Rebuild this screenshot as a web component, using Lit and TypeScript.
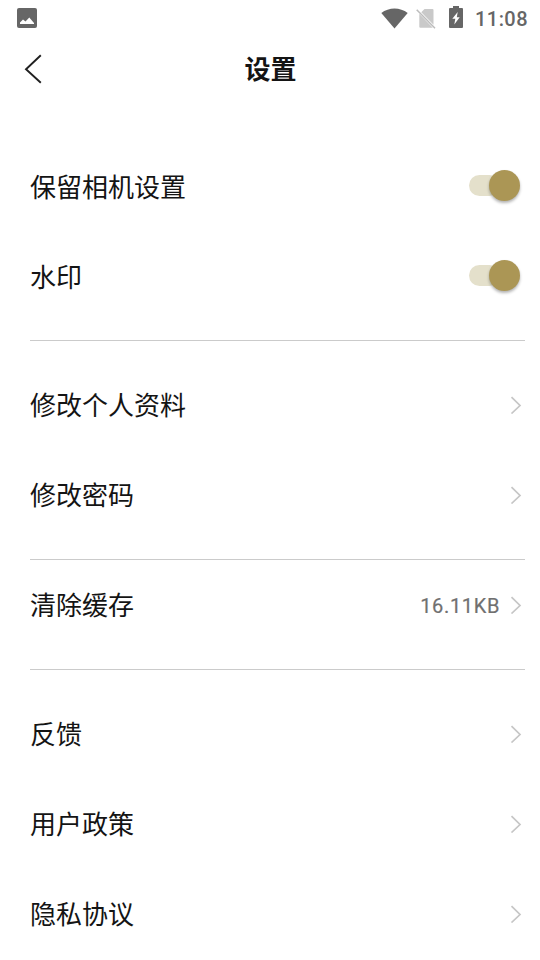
import { LitElement, html, css } from "lit";
import { customElement, property } from "lit/decorators.js";

@customElement("setting-row")
class SettingRow extends LitElement {
  @property() label = "";
  @property() value = "";
  @property({ reflect: true }) kind = "link";

  static styles = css`
    :host {
      display: flex;
      height: 90px;
      align-items: center;
      box-sizing: border-box;
      padding: 0 15px 0 30px;
      color: #141414;
    }
    .label {
      flex: 1;
      padding-top: 1px;
      font: 26px/38px Roboto, "Noto Sans CJK SC", sans-serif;
    }
    :host([kind="switch"]) .label { padding-top: 3px; }
    .value {
      font: 20px/24px Roboto, sans-serif;
      -webkit-text-stroke: 0.2px #707070;
      color: #707070;
      margin-right: 10px;
      padding-top: 2px;
      letter-spacing: 0.65px;
    }
    svg { display: block; margin-right: 3px; }
    .switch {
      display: flex;
      align-items: center;
      width: 51px;
      margin: 0 5px 1px 0;
    }
    .track {
      width: 31px;
      height: 21px;
      border-radius: 11px;
      background: #e4e0cb;
    }
    .thumb {
      width: 31px;
      height: 31px;
      margin-left: -11px;
      border-radius: 50%;
      background: #ab9655;
      box-shadow: 0 2px 3px #0000004d;
    }
  `;

  render() {
    return html`<span class="label">${this.label}</span>
      ${this.value ? html`<span class="value">${this.value}</span>` : null}
      ${this.kind === "switch"
        ? html`<span class="switch"><span class="track"></span><span class="thumb"></span></span>`
        : html`<svg width="12" height="18" viewBox="0 0 12 18">
            <path d="M1.5 1.2L10 9.5L1.5 17.5" fill="none" stroke="#c6c6c6" stroke-width="1.7" />
          </svg>`}`;
  }
}

@customElement("app-root")
class AppRoot extends LitElement {
  static styles = css`
    :host {
      display: block;
      width: 540px;
      height: 960px;
      overflow: hidden;
      background: #fff;
    }
    svg { display: block; }
    .status {
      display: flex;
      align-items: center;
      height: 36px;
      padding: 0 12px 0 17px;
      box-sizing: border-box;
      color: #666;
    }
    .photo { margin-right: auto; }
    .wifi { margin-right: 8px; }
    .sim { margin-right: 13px; }
    .battery { margin: 0 12px 2px 0; }
    .clock {
      font: 500 20px/24px Roboto, sans-serif;
      letter-spacing: 0.45px;
      padding-top: 2px;
    }
    header {
      display: grid;
      grid-template-columns: 1fr auto 1fr;
      align-items: center;
      height: 66px;
      padding: 0 23px 0 24px;
      margin-bottom: 39px;
    }
    h1 {
      margin: 0;
      padding-bottom: 2px;
      font: 700 26px/38px "Noto Sans CJK SC", sans-serif;
      color: #141414;
    }
    hr {
      height: 1px;
      border: 0;
      margin: 19px 15px 0 30px;
      background: #cbcbcb;
    }
    .spaced { padding-top: 19px; }
  `;

  render() {
    return html`
      <div class="status">
        <svg class="photo" width="20" height="20" viewBox="0 0 20 20">
          <rect width="20" height="20" rx="2" fill="#666" />
          <path d="M3 16V14.5L6 11.5L8.5 13.5L12.3 9.5L17 15V16Z" fill="#fff" />
        </svg>
        <svg class="wifi" width="27" height="21" viewBox="0 0 27 21">
          <path d="M.3 5C7.8-1.1 19.2-1.1 26.7 5L13.5 20.5Z" fill="#666" />
        </svg>
        <svg class="sim" width="20" height="21" viewBox="0 0 20 21">
          <path d="M8.5 1H16.5Q17.5 1 17.5 2V16.8L5.3 4.2ZM3.3 5.8L16.8 19.8H4.3Q3.3 19.8 3.3 18.8Z" fill="#c9c9c9" />
          <path d="M.7 1.7L19 20.2" stroke="#bcbcbc" stroke-width="1.5" />
        </svg>
        <svg class="battery" width="14" height="22" viewBox="0 0 14 22">
          <path d="M4 0H10V2H13Q14 2 14 3V21Q14 22 13 22H1Q0 22 0 21V3Q0 2 1 2H4Z" fill="#666" />
          <path d="M8.7 6L3.3 12.8H6.3L5.3 18.5L10.7 11.2H7.8Z" fill="#fff" />
        </svg>
        <span class="clock">11:08</span>
      </div>
      <header>
        <svg width="19" height="30" viewBox="0 0 19 30">
          <path d="M16.8 1.2L2 15.2L16.8 28.8" fill="none" stroke="#202020" stroke-width="1.9" />
        </svg>
        <h1>设置</h1>
      </header>
      <div>
        <setting-row kind="switch" label="保留相机设置"></setting-row>
        <setting-row kind="switch" label="水印"></setting-row>
      </div>
      <hr />
      <div class="spaced">
        <setting-row label="修改个人资料"></setting-row>
        <setting-row label="修改密码"></setting-row>
      </div>
      <hr />
      <div>
        <setting-row label="清除缓存" value="16.11KB"></setting-row>
      </div>
      <hr />
      <div class="spaced">
        <setting-row label="反馈"></setting-row>
        <setting-row label="用户政策"></setting-row>
        <setting-row label="隐私协议"></setting-row>
      </div>
    `;
  }
}
